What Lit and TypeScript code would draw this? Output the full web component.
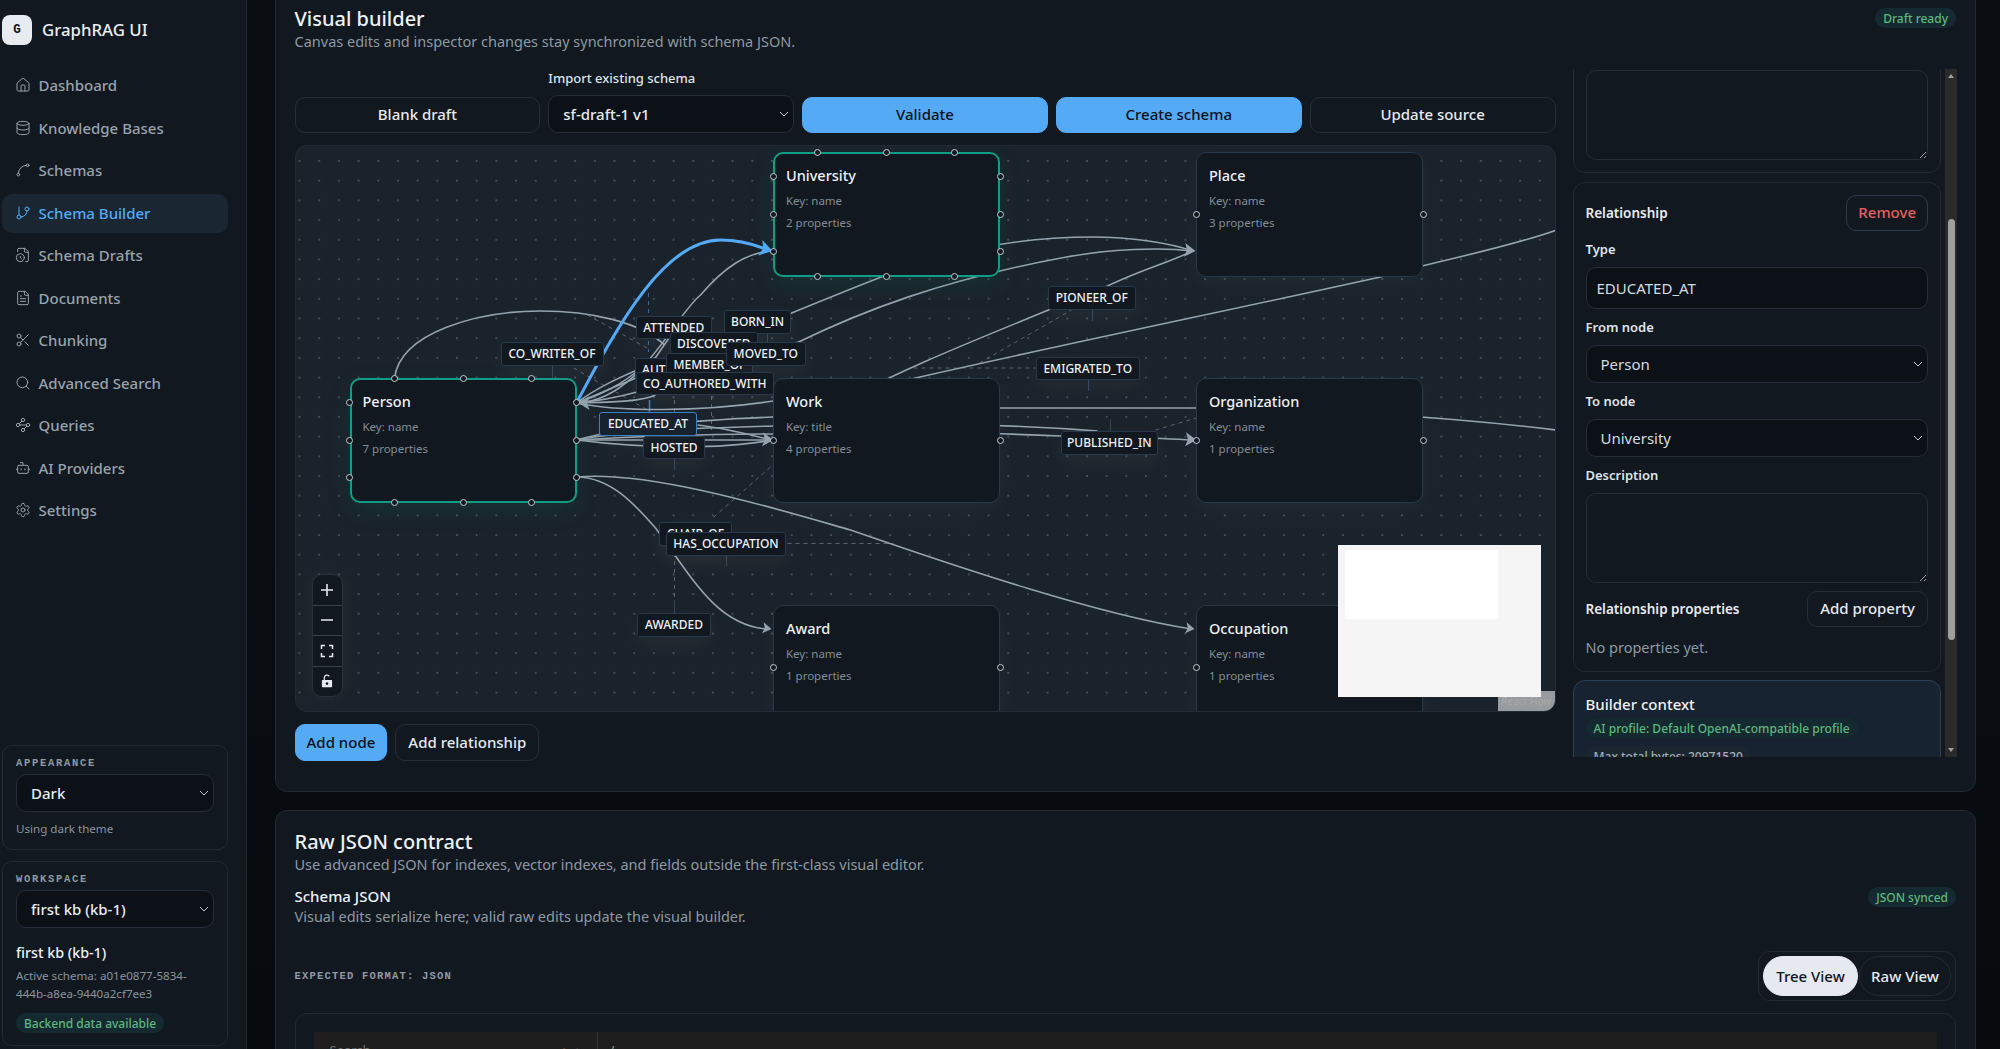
import { LitElement, html, css, svg, unsafeCSS } from "lit";
import { customElement } from "lit/decorators.js";

const OX = 294.5, OY = 145;
const CHEV = unsafeCSS(`url("data:image/svg+xml,%3Csvg xmlns='http://www.w3.org/2000/svg' width='10' height='6' viewBox='0 0 10 6'%3E%3Cpath d='M1 1l4 4 4-4' fill='none' stroke='%23c4cad0' stroke-width='1'/%3E%3C/svg%3E")`);

const icons: Record<string, any> = {
  home: svg`<path d="M15 21v-8a1 1 0 0 0-1-1h-4a1 1 0 0 0-1 1v8"/><path d="M3 10a2 2 0 0 1 .709-1.528l7-5.999a2 2 0 0 1 2.582 0l7 5.999A2 2 0 0 1 21 10v9a2 2 0 0 1-2 2H5a2 2 0 0 1-2-2z"/>`,
  db: svg`<ellipse cx="12" cy="5" rx="9" ry="3"/><path d="M3 5V19A9 3 0 0 0 21 19V5"/><path d="M3 12A9 3 0 0 0 21 12"/>`,
  spline: svg`<circle cx="19" cy="5" r="2"/><circle cx="5" cy="19" r="2"/><path d="M5 17A12 12 0 0 1 17 5"/>`,
  branch: svg`<line x1="6" x2="6" y1="3" y2="15"/><circle cx="18" cy="6" r="3"/><circle cx="6" cy="18" r="3"/><path d="M18 9a9 9 0 0 1-9 9"/>`,
  fileclock: svg`<path d="M16 22h2a2 2 0 0 0 2-2V7l-5-5H6a2 2 0 0 0-2 2v3"/><path d="M14 2v4a2 2 0 0 0 2 2h4"/><circle cx="8" cy="16" r="6"/><path d="M9.5 17.5 8 16.25V14"/>`,
  file: svg`<path d="M15 2H6a2 2 0 0 0-2 2v16a2 2 0 0 0 2 2h12a2 2 0 0 0 2-2V7Z"/><path d="M14 2v4a2 2 0 0 0 2 2h4"/><path d="M10 9H8"/><path d="M16 13H8"/><path d="M16 17H8"/>`,
  scissors: svg`<circle cx="6" cy="6" r="3"/><path d="M8.12 8.12 12 12"/><path d="M20 4 8.12 15.88"/><circle cx="6" cy="18" r="3"/><path d="M14.8 14.8 20 20"/>`,
  search: svg`<circle cx="11" cy="11" r="8"/><path d="m21 21-4.3-4.3"/>`,
  way: svg`<circle cx="12" cy="4.5" r="2.5"/><path d="m10.2 6.3-3.9 3.9"/><circle cx="4.5" cy="12" r="2.5"/><path d="M7 12h10"/><circle cx="19.5" cy="12" r="2.5"/><path d="m13.8 17.7 3.9-3.9"/><circle cx="12" cy="19.5" r="2.5"/>`,
  bot: svg`<path d="M12 8V4H8"/><rect width="16" height="12" x="4" y="8" rx="2"/><path d="M2 14h2"/><path d="M20 14h2"/><path d="M15 13v2"/><path d="M9 13v2"/>`,
  gear: svg`<path d="M12.22 2h-.44a2 2 0 0 0-2 2v.18a2 2 0 0 1-1 1.73l-.43.25a2 2 0 0 1-2 0l-.15-.08a2 2 0 0 0-2.73.73l-.22.38a2 2 0 0 0 .73 2.73l.15.1a2 2 0 0 1 1 1.72v.51a2 2 0 0 1-1 1.74l-.15.09a2 2 0 0 0-.73 2.73l.22.38a2 2 0 0 0 2.73.73l.15-.08a2 2 0 0 1 2 0l.43.25a2 2 0 0 1 1 1.73V20a2 2 0 0 0 2 2h.44a2 2 0 0 0 2-2v-.18a2 2 0 0 1 1-1.73l.43-.25a2 2 0 0 1 2 0l.15.08a2 2 0 0 0 2.73-.73l.22-.39a2 2 0 0 0-.73-2.73l-.15-.08a2 2 0 0 1-1-1.74v-.5a2 2 0 0 1 1-1.74l.15-.09a2 2 0 0 0 .73-2.73l-.22-.38a2 2 0 0 0-2.73-.73l-.15.08a2 2 0 0 1-2 0l-.43-.25a2 2 0 0 1-1-1.73V4a2 2 0 0 0-2-2z"/><circle cx="12" cy="12" r="3"/>`,
};

const nav = [
  ["home", "Dashboard"], ["db", "Knowledge Bases"], ["spline", "Schemas"], ["branch", "Schema Builder"],
  ["fileclock", "Schema Drafts"], ["file", "Documents"], ["scissors", "Chunking"], ["search", "Advanced Search"],
  ["way", "Queries"], ["bot", "AI Providers"], ["gear", "Settings"],
];

const W = 227, H = 124.5;
const nodes = [
  { n: "Place", k: "name", p: 3, x: 1196, y: 152 },
  { n: "Organization", k: "name", p: 1, x: 1196, y: 378 },
  { n: "Work", k: "title", p: 4, x: 773, y: 378 },
  { n: "Award", k: "name", p: 1, x: 773, y: 605 },
  { n: "Occupation", k: "name", p: 1, x: 1196, y: 605 },
  { n: "University", k: "name", p: 2, x: 773, y: 152, sel: true },
  { n: "Person", k: "name", p: 7, x: 349.5, y: 378, sel: true },
];

const edges = [
  "M394 378 C400 332 478 311 540 311 C590 311 640 322 664 345",
  "M576 403 C650 372 790 312 886 275 C930 258 1000 237 1092 237 C1130 237 1170 243 1192 251",
  "M576 403 C640 398 700 370 798 342 C860 312 940 280 1066 257 C1110 249 1160 247 1192 251",
  "M830 410 C880 376 1000 330 1107 286 C1140 270 1170 262 1192 251",
  "M860 392 C880 386 900 382 915 378 C1060 345 1230 310 1380 277 C1430 262 1500 250 1556 230",
  "M576 403 C640 400 672 318 700 295 C725 266 745 254 769 251",
  "M576 403 C600 385 625 375 655 362",
  "M576 403 C610 392 630 378 650 360",
  "M576 403 C610 402 640 402 655 395",
  "M576 403 C620 412 700 412 773 401",
  "M640 380 C650 365 660 350 670 336",
  "M576 440 C630 425 700 420 773 417",
  "M576 440 C630 430 700 428 773 426",
  "M576 440 C640 436 700 434 773 434",
  "M576 440 L771 440",
  "M576 440 C640 448 720 450 771 440",
  "M697 425 C725 428 750 435 771 440",
  "M900 408 L1196 408 C1300 408 1440 416 1556 430",
  "M900 424 C960 424 1030 426 1097 431",
  "M900 432 C960 432 1010 434 1060 436 C1110 438 1150 437 1192 440",
  "M576 477 C650 470 780 510 850 530 C960 568 1100 615 1191 629",
  "M576 477 C610 477 635 505 655 528 C690 575 715 625 766 629",
];

const dashes = [
  ["M587 315 L650 350", "#6f7b87"], ["M573 368 L647 410", "#6f7b87"], ["M648 293 L648 352", "#3d7fc4"],
  ["M770 467 L710 520", "#6f7b87"], ["M674 553 L674 613", "#6f7b87"], ["M787 543.5 L893 543.5", "#6f7b87"],
  ["M913 368 L1035 368", "#6f7b87"], ["M979 363 L1071 310", "#6f7b87"], ["M1155 430 L1196 418", "#6f7b87"],
  ["M674 400 L674 430", "#6f7b87"], ["M711 396 L711 430", "#6f7b87"],
];

const stubs = [
  [552, 366, 552, 378], [767, 333, 767, 343], [674, 459, 674, 470], [1088, 380, 1088, 391],
  [1092, 310, 1092, 321], [1110, 419, 1110, 431], [726, 555, 726, 566], [674, 600, 674, 613],
];

const labels: { t: string; x: number; y: number; w: number; sel?: boolean }[] = [
  { t: "CO_WRITER_OF", x: 500.5, y: 342, w: 103 },
  { t: "ATTENDED", x: 635.5, y: 315.5, w: 76.5 },
  { t: "BORN_IN", x: 724, y: 310, w: 67 },
  { t: "DISCOVERED", x: 669.5, y: 332, w: 88.5 },
  { t: "AUTHORED", x: 634.5, y: 358, w: 80 },
  { t: "MEMBER_OF", x: 666, y: 353, w: 87 },
  { t: "MOVED_TO", x: 725.5, y: 342, w: 80.5 },
  { t: "CO_AUTHORED_WITH", x: 635.5, y: 371.5, w: 138.5 },
  { t: "HOSTED", x: 643, y: 435.5, w: 62 },
  { t: "EDUCATED_AT", x: 599, y: 412, w: 98, sel: true },
  { t: "PIONEER_OF", x: 1048, y: 286, w: 87.5 },
  { t: "EMIGRATED_TO", x: 1035.5, y: 356.5, w: 104.5 },
  { t: "PUBLISHED_IN", x: 1060.5, y: 431, w: 97.5 },
  { t: "CHAIR_OF", x: 659, y: 522, w: 73 },
  { t: "HAS_OCCUPATION", x: 666, y: 532, w: 120 },
  { t: "AWARDED", x: 637, y: 613, w: 74 },
];

const arrows: [number, number, number, string, number][] = [
  [578, 403, 180, "#94a3ae", 1],
  [773, 440, 4, "#94a3ae", 1],
  [1195, 251, 6, "#94a3ae", 1],
  [1196, 440, 4, "#94a3ae", 1],
  [771, 629, 8, "#94a3ae", 0.8],
  [1194, 629, 8, "#94a3ae", 0.8],
  [772, 251, 15, "#54aaf5", 1.15],
];

@customElement("app-root")
export class AppRoot extends LitElement {
  static styles = css`
    :host { display: block; width: 2000px; height: 1049px; overflow: hidden; background: #0a0e12; color: #e6eaf0;
      font-family: "Noto Sans", sans-serif; color-scheme: dark; }
    * { box-sizing: border-box; }
    .app { display: flex; height: 1049px; overflow: hidden; }
    .side { width: 247px; flex: none; background: #11181f; border-right: 1px solid #232a33; padding: 15px 18px 3px 2px;
      display: flex; flex-direction: column; }
    .brand { display: flex; align-items: center; gap: 10px; height: 30px; font-size: 16.8px; font-weight: 500; color: #e9edf2; padding-bottom: 1px; }
    .logo { width: 30px; height: 30px; border-radius: 8px; background: #e8ebf0; color: #10161d; display: grid; place-items: center;
      font: 700 12.5px "Liberation Mono", monospace; }
    .nav { margin-top: 21px; display: flex; flex-direction: column; gap: 3.5px; }
    .item { height: 39px; display: flex; align-items: center; gap: 7.5px; padding: 0 0 1px 13px; border-radius: 10px;
      font-size: 15px; font-weight: 500; color: #98a2ad; }
    .item svg { width: 16px; height: 16px; fill: none; stroke: currentColor; stroke-width: 1.5; stroke-linecap: round; stroke-linejoin: round; flex: none; }
    .item.on { background: #1a2733; color: #54aaf5; }
    .spacer { flex: 1; }
    .sidecard { border: 1px solid #232a33; border-radius: 10px; padding: 10px 13px 0; margin-top: 11px; }
    .mono { font: 700 10.5px "Liberation Mono", monospace; letter-spacing: 1.7px; color: #8f99a3; line-height: 15px; }
    .dim12 { font-size: 11.6px; color: #8b949e; line-height: 18px; }
    select { appearance: none; width: 100%; height: 38px; border-radius: 10px; border: 1px solid #252d38; background: #0c1118 ${CHEV} no-repeat right 4px center;
      color: #e6eaf0; font: 500 15px "Noto Sans", sans-serif; padding: 0 18px 0 14px; outline: none; }
    .sidecard select { margin-top: 3px; display: block; }
    .wk { font-size: 14.3px; font-weight: 500; margin-top: 15px; line-height: 20px; color: #eef1f5; }

    .main { flex: 1; min-width: 0; padding: 0 24px 0 28px; background: linear-gradient(#0a0e12, #080b0e); }
    .panel { background: #11181f; border: 1px solid #232a33; border-radius: 12px; padding: 0 19px 0 18.5px; }
    .p1 { margin-top: -12px; padding-top: 18px; padding-bottom: 30px; }
    .p2 { margin-top: 18px; padding-top: 19px; height: 400px; }
    .head { display: flex; justify-content: space-between; align-items: flex-start; }
    h2 { margin: 0; font-size: 20px; font-weight: 500; line-height: 24px; color: #eef1f5; }
    .sub { font-size: 14.5px; line-height: 20px; color: #8f99a3; }
    .badge { display: inline-flex; align-items: center; height: 20px; padding: 0 8px; border-radius: 10px; background: #152a30;
      color: #5fb67f; font-size: 12px; font-weight: 500; white-space: nowrap; }
    .grid { display: grid; grid-template-columns: 1261px 384px; gap: 17px; margin-top: 18px; align-items: start; }
    .tools { display: grid; grid-template-columns: repeat(5, 1fr); gap: 8px; align-items: end; }
    .btn { height: 36px; border: 1px solid #252d38; border-radius: 10px; background: transparent; color: #e6eaf0;
      font: 500 15px "Noto Sans", sans-serif; padding: 0 12px 2px; display: inline-flex; align-items: center; justify-content: center; white-space: nowrap; }
    .btn.pri { background: #54aaf5; border-color: #54aaf5; color: #0b1118; }
    .field label { display: block; font-size: 13px; font-weight: 500; line-height: 18px; margin-bottom: 8px; color: #dfe4ea; }
    .canvas { position: relative; margin-top: 12px; height: 567px; overflow: hidden; border: 1px solid #232c36; border-radius: 12px;
      background-color: #1a222b; background-image: radial-gradient(circle, #434c56 0.7px, transparent 1px);
      background-size: 19.7px 19.7px; background-position: -6.35px 5.15px; }
    .edges { position: absolute; left: -1px; top: -1px; width: 1262px; height: 568px; }
    .node { position: absolute; background: #11181f; border: 1px solid #28394b; border-radius: 10px; padding: 11.5px 12px;
      box-shadow: 0 8px 26px rgba(255,255,255,.035); }
    .node.sel { border: 2px solid #0f9d85; padding: 10.5px 11px; box-shadow: 0 8px 26px rgba(15,157,133,.12); }
    .node b { display: block; font-size: 14.5px; font-weight: 500; line-height: 20px; color: #eef1f5; }
    .node span.m { display: block; font-size: 11.5px; color: #838d97; line-height: 22px; }
    .node span.m.first { margin-top: 5px; }
    .h { position: absolute; width: 7px; height: 7px; margin: -3.5px 0 0 -3.5px; border-radius: 50%; background: #11181f; border: 1.2px solid #c5ccd4; }
    .lab { position: absolute; height: 23.5px; display: grid; place-items: center; background: #11181f; border: 1px solid #28394b; border-radius: 3px;
      font-size: 12px; font-weight: 500; color: #eef1f5; white-space: nowrap; overflow: hidden; box-shadow: 0 8px 22px rgba(255,255,255,.05); }
    .lab.sel { background: #17222e; border: 1.5px solid #3d7fc4; }
    .ctrl { position: absolute; left: 16px; top: 428px; width: 31.5px; height: 123px; display: flex; flex-direction: column; background: #11181f;
      border: 1px solid #28323d; border-radius: 10px; overflow: hidden; box-shadow: 0 0 18px rgba(255,255,255,.05); }
    .ctrl div { flex: 1; display: grid; place-items: center; border-top: 1px solid #3a424c; }
    .ctrl div:first-child { border-top: 0; }
    .ctrl svg { width: 14px; height: 14px; }
    .mini { position: absolute; left: 1042px; top: 398.5px; width: 203px; height: 152px; background: #f5f5f5; z-index: 3; }
    .mini div { margin: 5px 0 0 7px; width: 153.5px; height: 69px; background: #fff; }
    .attr { position: absolute; right: 0; bottom: 0; width: 56.5px; height: 20px; background: rgba(255,255,255,.55); color: #a9a9a9;
      font-size: 10px; display: flex; align-items: flex-end; justify-content: center; padding-bottom: 3px; }
    .below { display: flex; gap: 8px; margin-top: 12px; }
    .below .btn { height: 37px; }
    .below .btn.pri { padding: 0 11px 2px; }

    .right { display: flex; height: 688px; gap: 3.5px; }
    .scroll { width: 368.5px; flex: none; overflow: hidden; display: flex; flex-direction: column; gap: 8.5px; }
    .card { border: 1px solid #232a33; border-radius: 12px; padding: 12px; flex: none; display: flex; flex-direction: column; gap: 10px; }
    .card.top { margin-top: -20px; padding-top: 20px; }
    .card input, .card textarea { width: 100%; display: block; border: 1px solid #252d38; border-radius: 10px; color: #d5dae0;
      font: 400 15px "Noto Sans", sans-serif; outline: none; }
    .card input { height: 42px; background: #0c1118; padding: 0 10px; }
    .card textarea { height: 90px; background: #11181f; padding: 8px; resize: vertical; }
    .card select { font-weight: 400; color: #d5dae0; }
    .row { display: flex; justify-content: space-between; align-items: center; }
    .row b { font-size: 13.5px; font-weight: 600; color: #e6eaf0; }
    .flabel { font-size: 13px; font-weight: 600; line-height: 16px; color: #dfe4ea; }
    .btn.red { color: #e56060; border-color: #2d3a4f; padding: 0 11px 2px; }
    .ctx { background: #172330; border-color: #2b4056; padding-top: 13px; gap: 4px; }
    .ctx h4 { margin: 0; font-size: 15px; font-weight: 500; line-height: 20px; color: #eef1f5; }
    .ctx .badge { align-self: flex-start; }
    .g2 { background: #1b2530; color: #a4adb6; margin-top: 4px; }
    .bar { width: 12.5px; background: #2a2a2a; position: relative; flex: none; }
    .thumb { position: absolute; left: 3px; top: 150px; width: 7px; height: 421px; border-radius: 4px; background: #9e9e9e; }
    .tri { position: absolute; left: 3px; width: 0; height: 0; border-left: 3.5px solid transparent; border-right: 3.5px solid transparent; }
    .tri.u { top: 5px; border-bottom: 4px solid #9e9e9e; }
    .tri.d { bottom: 5px; border-top: 4px solid #9e9e9e; }

    .sec { margin-top: 12px; display: flex; justify-content: space-between; align-items: flex-start; }
    .sec b { display: block; font-size: 15px; font-weight: 500; line-height: 20px; color: #eef1f5; }
    .sec .badge { margin-top: 1px; }
    .fmt { margin-top: 25px; display: flex; justify-content: space-between; align-items: center; height: 50px; }
    .fmt .mono { letter-spacing: 1.2px; font-size: 10.5px; }
    .toggle { width: 198px; height: 50px; border: 1px solid #232a33; border-radius: 12px; padding: 4px; display: flex; gap: 1px; }
    .toggle span { height: 40px; border-radius: 20px; display: grid; place-items: center; font-size: 15px; font-weight: 500; border: 1px solid #232a33; }
    .toggle .a { width: 95px; background: #e6eaf0; color: #10161d; border-color: #e6eaf0; }
    .toggle .b { width: 92px; }
    .ed { margin-top: 12px; border: 1px solid #232a33; border-radius: 12px; padding: 18px; height: 200px; }
    .edin { background: #1e1e1e; height: 100px; display: flex; font-size: 13px; color: #6f6f6f; }
    .sb { width: 284px; border-right: 1px solid #333; padding: 9px 16px; display: flex; justify-content: space-between; }
    .sl { padding: 9px 12px; color: #9a9a9a; }
  `;

  private arrowEl(a: [number, number, number, string, number]) {
    const [x, y, r, c, s] = a;
    return svg`<polygon transform="translate(${x} ${y}) rotate(${r}) scale(${s})" points="0,0 -11,-7 -8.5,0 -11,7" fill=${c}></polygon>`;
  }

  private handles(nd: any) {
    const hs: [number, number][] = [];
    const b = nd.sel ? 2 : 1;
    if (nd.sel) {
      [0.197, 0.5, 0.8].forEach((t) => { hs.push([t * W, 0]); hs.push([t * W, H]); });
      [0.2, 0.5, 0.8].forEach((t) => { hs.push([0, t * H]); hs.push([W, t * H]); });
    } else {
      hs.push([0, nd.y === 605 ? 62 : H / 2]);
      if (nd.n !== "Occupation") hs.push([W, nd.y === 605 ? 62 : H / 2]);
    }
    return hs.map(([x, y]) => html`<i class="h" style="left:${x - b}px;top:${y - b}px"></i>`);
  }

  render() {
    return html`<div class="app">
      <aside class="side">
        <div class="brand"><div class="logo">G</div>GraphRAG UI</div>
        <nav class="nav">
          ${nav.map(([i, t]) => html`<div class="item ${t === "Schema Builder" ? "on" : ""}"><svg viewBox="0 0 24 24">${icons[i]}</svg>${t}</div>`)}
        </nav>
        <div class="spacer"></div>
        <div class="sidecard" style="padding-bottom:11px">
          <div class="mono">APPEARANCE</div>
          <select><option>Dark</option></select>
          <div class="dim12" style="margin-top:8px">Using dark theme</div>
        </div>
        <div class="sidecard" style="padding-bottom:12px">
          <div class="mono">WORKSPACE</div>
          <select><option>first kb (kb-1)</option></select>
          <div class="wk">first kb (kb-1)</div>
          <div class="dim12" style="margin-top:4px">Active schema: a01e0877-5834-<br />444b-a8ea-9440a2cf7ee3</div>
          <span class="badge" style="margin-top:10px">Backend data available</span>
        </div>
      </aside>
      <main class="main">
        <section class="panel p1">
          <div class="head">
            <div><h2>Visual builder</h2><div class="sub">Canvas edits and inspector changes stay synchronized with schema JSON.</div></div>
            <span class="badge" style="margin-top:1px">Draft ready</span>
          </div>
          <div class="grid">
            <div>
              <div class="tools">
                <button class="btn">Blank draft</button>
                <div class="field"><label>Import existing schema</label><select><option>sf-draft-1 v1</option></select></div>
                <button class="btn pri">Validate</button>
                <button class="btn pri">Create schema</button>
                <button class="btn">Update source</button>
              </div>
              <div class="canvas">
                <svg class="edges" viewBox="${OX} ${OY} 1262 568" fill="none">
                  ${dashes.map(([d, c]) => svg`<path d=${d} stroke=${c} stroke-width="1" stroke-dasharray="4 4" opacity=".75"></path>`)}
                  ${stubs.map(([a, b, c, d]) => svg`<line x1=${a} y1=${b} x2=${c} y2=${d} stroke="#2f4560"></line>`)}
                  <line x1="649" y1="400" x2="649" y2="412" stroke="#3d7fc4" stroke-width="1.5"></line>
                  ${edges.map((d) => svg`<path d=${d} stroke="#94a3ae" stroke-width="1.6"></path>`)}
                  <path d="M576 403 C620 320 665 240 720 240 C740 240 755 245 765 249" stroke="#54aaf5" stroke-width="3"></path>
                  ${arrows.map((a) => this.arrowEl(a))}
                </svg>
                ${nodes.map((n) => html`<div class="node ${n.sel ? "sel" : ""}" style="left:${n.x - OX - 1}px;top:${n.y - OY - 1}px;width:${W}px;height:${H}px">
                  <b>${n.n}</b><span class="m first">Key: ${n.k}</span><span class="m">${n.p} properties</span>${this.handles(n)}
                </div>`)}
                ${labels.map((l) => html`<div class="lab ${l.sel ? "sel" : ""}" style="left:${l.x - OX - 1}px;top:${l.y - OY - 1}px;width:${l.w}px">${l.t}</div>`)}
                <div class="ctrl">
                  <div><svg viewBox="0 0 14 14" fill="none" stroke="#e6eaf0" stroke-width="1.6"><path d="M7 1v12M1 7h12"/></svg></div>
                  <div><svg viewBox="0 0 14 14" fill="none" stroke="#e6eaf0" stroke-width="1.6"><path d="M1 7h12"/></svg></div>
                  <div><svg viewBox="0 0 14 14" fill="none" stroke="#e6eaf0" stroke-width="1.5"><path d="M1.5 5V1.5H5M9 1.5h3.5V5M12.5 9v3.5H9M5 12.5H1.5V9"/></svg></div>
                  <div><svg viewBox="0 0 14 14"><path d="M2.5 6h9a.6.6 0 0 1 .6.6v6a.6.6 0 0 1-.6.6h-9a.6.6 0 0 1-.6-.6v-6a.6.6 0 0 1 .6-.6z" fill="#e6eaf0"/><path d="M4.3 6V3.6a2.7 2.7 0 0 1 5-1.2" fill="none" stroke="#e6eaf0" stroke-width="1.2"/><circle cx="7" cy="9.6" r="1.3" fill="#11181f"/></svg></div>
                </div>
                <div class="attr">React Flow</div>
                <div class="mini"><div></div></div>
              </div>
              <div class="below"><button class="btn pri">Add node</button><button class="btn">Add relationship</button></div>
            </div>
            <div class="right">
              <div class="scroll">
                <div class="card top"><textarea></textarea></div>
                <div class="card">
                  <div class="row"><b>Relationship</b><button class="btn red">Remove</button></div>
                  <div class="flabel">Type</div>
                  <input value="EDUCATED_AT" />
                  <div class="flabel">From node</div>
                  <select><option>Person</option></select>
                  <div class="flabel">To node</div>
                  <select><option>University</option></select>
                  <div class="flabel">Description</div>
                  <textarea></textarea>
                  <div class="row" style="margin-top:-2px"><b>Relationship properties</b><button class="btn">Add property</button></div>
                  <div class="sub" style="margin-bottom:2px">No properties yet.</div>
                </div>
                <div class="card ctx">
                  <h4>Builder context</h4>
                  <span class="badge">AI profile: Default OpenAI-compatible profile</span>
                  <span class="badge g2">Max total bytes: 20971520</span>
                </div>
              </div>
              <div class="bar"><i class="tri u"></i><i class="thumb"></i><i class="tri d"></i></div>
            </div>
          </div>
        </section>
        <section class="panel p2">
          <h2>Raw JSON contract</h2>
          <div class="sub">Use advanced JSON for indexes, vector indexes, and fields outside the first-class visual editor.</div>
          <div class="sec">
            <div><b>Schema JSON</b><div class="sub">Visual edits serialize here; valid raw edits update the visual builder.</div></div>
            <span class="badge">JSON synced</span>
          </div>
          <div class="fmt">
            <div class="mono">EXPECTED FORMAT: JSON</div>
            <div class="toggle"><span class="a">Tree View</span><span class="b">Raw View</span></div>
          </div>
          <div class="ed"><div class="edin"><div class="sb"><span>Search</span><span>↑&nbsp;&nbsp;↓</span></div><div class="sl">/</div></div></div>
        </section>
      </main>
    </div>`;
  }
}
